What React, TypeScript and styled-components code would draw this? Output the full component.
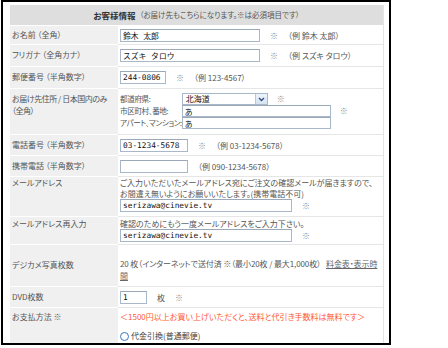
import React from 'react';
import styled, { createGlobalStyle } from 'styled-components';

const GlobalStyle = createGlobalStyle`
  html, body {
    margin: 0;
    padding: 0;
    background: #fff;
  }
  body {
    font-family: "Noto Sans CJK JP", "Noto Sans", sans-serif;
    font-feature-settings: "palt";
  }
`;

const Page = styled.div`
  padding-left: 1px;
`;

const Frame = styled.div`
  box-sizing: border-box;
  width: 390px;
  height: 345px;
  border: 2px solid #000;
  padding: 3px 5px 0 7px;
  overflow: hidden;
`;

const Table = styled.div`
  display: flex;
  flex-direction: column;
  border-right: 1px solid #e4e4e4;
  font-size: 8px;
  line-height: 12px;
  color: #555;
`;

const Header = styled.div`
  height: 20px;
  background: #dedede;
  display: flex;
  align-items: center;
  justify-content: center;
  border-bottom: 1px solid #fff;
`;

const HeaderTitle = styled.span`
  font-weight: bold;
  font-size: 8.5px;
  color: #333;
  margin-right: 4px;
`;

const HeaderNote = styled.span`
  font-size: 7.5px;
`;

const Row = styled.div`
  display: grid;
  grid-template-columns: 108px 1fr;
`;

const Label = styled.div<{ $top?: number; $tight?: boolean }>`
  background: #f0f0f0;
  border-bottom: 1px solid #fff;
  padding: ${(p) => p.$top ?? 4}px 0 0 2px;
  white-space: nowrap;
  overflow: hidden;
  letter-spacing: ${(p) => (p.$tight ? '-0.45px' : '0')};
`;

const Value = styled.div<{ $pad?: string }>`
  border-bottom: 1px solid #e6e6e6;
  padding: ${(p) => p.$pad ?? '4px 2px 3px'};
  display: flex;
  flex-direction: column;
`;

const Line = styled.div`
  display: flex;
  align-items: center;
  gap: 10px;
  white-space: nowrap;
`;

const Input = styled.input<{ $w: number; $h?: number }>`
  box-sizing: border-box;
  width: ${(p) => p.$w}px;
  height: ${(p) => p.$h ?? 13}px;
  margin: 0;
  padding: 0 2px;
  border: 1px solid #a9b8c9;
  border-top-color: #9aa8b8;
  background: #fff;
  font-family: "DejaVu Sans Mono", "Noto Sans CJK JP", monospace;
  font-size: 7.8px;
  color: #111;
  outline: none;
`;

const Mark = styled.span`
  color: #8c8c8c;
  font-size: 8px;
`;

const AddressGrid = styled.div`
  display: grid;
  grid-template-columns: minmax(60px, max-content) auto;
  align-items: center;
  white-space: nowrap;
`;

const SubLabel = styled.span`
  font-size: 7.6px;
  letter-spacing: -0.4px;
`;

const FieldWithMark = styled.div`
  display: flex;
  align-items: center;
  gap: 9px;
`;

const FakeSelect = styled.div`
  box-sizing: border-box;
  width: 86px;
  height: 12px;
  border: 1px solid #a9b8c9;
  background: #fff;
  display: flex;
  align-items: center;
  justify-content: space-between;
  padding-left: 3px;
  color: #111;
`;

const SelectArrow = styled.span`
  width: 11px;
  height: 10px;
  background: linear-gradient(#eef4fb, #d6e3f1);
  border-left: 1px solid #b7c8dc;
  display: flex;
  align-items: center;
  justify-content: center;
`;

const Note = styled.div`
  white-space: nowrap;
  line-height: 11px;
`;

const PhotoText = styled.div`
  white-space: nowrap;
  letter-spacing: -0.1px;
`;

const Link = styled.a`
  color: #666;
  text-decoration: underline;
  margin-left: 5px;
`;

const Notice = styled.div`
  color: #ff5a36;
  white-space: nowrap;
`;

const RadioLine = styled.label`
  display: flex;
  align-items: center;
  gap: 2px;
  margin-top: 7px;
  color: #444;
`;

const Radio = styled.span`
  box-sizing: border-box;
  width: 9px;
  height: 9px;
  border-radius: 50%;
  border: 1px solid #3a78c2;
  background: #fff;
`;

function Field({ w, value, mark, hint }: { w: number; value?: string; mark?: boolean; hint?: string }) {
  return (
    <Line>
      <Input $w={w} defaultValue={value} readOnly />
      {mark && <Mark>※</Mark>}
      {hint && <span>{hint}</span>}
    </Line>
  );
}

export default function App() {
  return (
    <Page>
      <GlobalStyle />
      <Frame>
        <Table>
          <Header>
            <HeaderTitle>お客様情報</HeaderTitle>
            <HeaderNote>（お届け先もこちらになります。※は必須項目です）</HeaderNote>
          </Header>

          <Row>
            <Label $top={3}>お名前 （全角）</Label>
            <Value $pad="3px 2px 2px">
              <Field w={140} value="鈴木 太郎" mark hint="（例 鈴木 太郎）" />
            </Value>
          </Row>

          <Row>
            <Label>フリガナ （全角カナ）</Label>
            <Value $pad="4px 2px">
              <Field w={140} value="スズキ タロウ" mark hint="（例 スズキ タロウ）" />
            </Value>
          </Row>

          <Row>
            <Label>郵便番号 （半角数字）</Label>
            <Value $pad="4px 2px 4px">
              <Field w={46} value="244-0806" mark hint="（例 123-4567）" />
            </Value>
          </Row>

          <Row>
            <Label $top={4} $tight>
              お届け先住所 / 日本国内のみ
              <br />
              （全角）
            </Label>
            <Value $pad="4px 2px 5px">
              <AddressGrid>
                <SubLabel>都道府県:</SubLabel>
                <FieldWithMark>
                  <FakeSelect>
                    北海道
                    <SelectArrow>
                      <svg width="7" height="5" viewBox="0 0 7 5">
                        <path d="M1 1 L3.5 3.5 L6 1" stroke="#2c4f82" strokeWidth="1.4" fill="none" />
                      </svg>
                    </SelectArrow>
                  </FakeSelect>
                  <Mark>※</Mark>
                </FieldWithMark>
                <SubLabel>市区町村、番地:</SubLabel>
                <FieldWithMark>
                  <Input $w={149} $h={12} defaultValue="あ" readOnly />
                  <Mark>※</Mark>
                </FieldWithMark>
                <SubLabel>アパート、マンション:</SubLabel>
                <FieldWithMark>
                  <Input $w={149} $h={12} defaultValue="あ" readOnly />
                </FieldWithMark>
              </AddressGrid>
            </Value>
          </Row>

          <Row>
            <Label>電話番号 （半角数字）</Label>
            <Value>
              <Field w={68} value="03-1234-5678" mark hint="（例 03-1234-5678）" />
            </Value>
          </Row>

          <Row>
            <Label>携帯電話 （半角数字）</Label>
            <Value>
              <Field w={68} hint="（例 090-1234-5678）" />
            </Value>
          </Row>

          <Row>
            <Label $top={0}>メールアドレス</Label>
            <Value $pad="0 2px 4px">
              <Note>ご入力いただいたメールアドレス宛にご注文の確認メールが届きますので、</Note>
              <Note>お間違え無いようにお願いいたします。(携帯電話不可)</Note>
              <Field w={172} value="serizawa@cinevie.tv" mark />
            </Value>
          </Row>

          <Row>
            <Label $top={1}>メールアドレス再入力</Label>
            <Value $pad="1px 2px 2px">
              <Note>確認のためにもう一度メールアドレスをご入力下さい。</Note>
              <Field w={172} value="serizawa@cinevie.tv" mark />
            </Value>
          </Row>

          <Row>
            <Label $top={14}>デジカメ写真枚数</Label>
            <Value $pad="13px 2px 4px">
              <PhotoText>
                20 枚（インターネットで送付済 ※（最小20枚 / 最大1,000枚）
                <Link>
                  料金表・表示時
                  <br />
                  間
                </Link>
              </PhotoText>
            </Value>
          </Row>

          <Row>
            <Label>DVD枚数</Label>
            <Value>
              <Line>
                <Input $w={27} defaultValue="1" readOnly />
                <span>枚</span>
                <Mark>※</Mark>
              </Line>
            </Value>
          </Row>

          <Row>
            <Label $top={3}>お支払方法 ※</Label>
            <Value $pad="3px 2px 10px">
              <Notice>＜1500円以上お買い上げいただくと、送料と代引き手数料は無料です＞</Notice>
              <RadioLine>
                <Radio />
                代金引換(普通郵便)
              </RadioLine>
            </Value>
          </Row>
        </Table>
      </Frame>
    </Page>
  );
}
